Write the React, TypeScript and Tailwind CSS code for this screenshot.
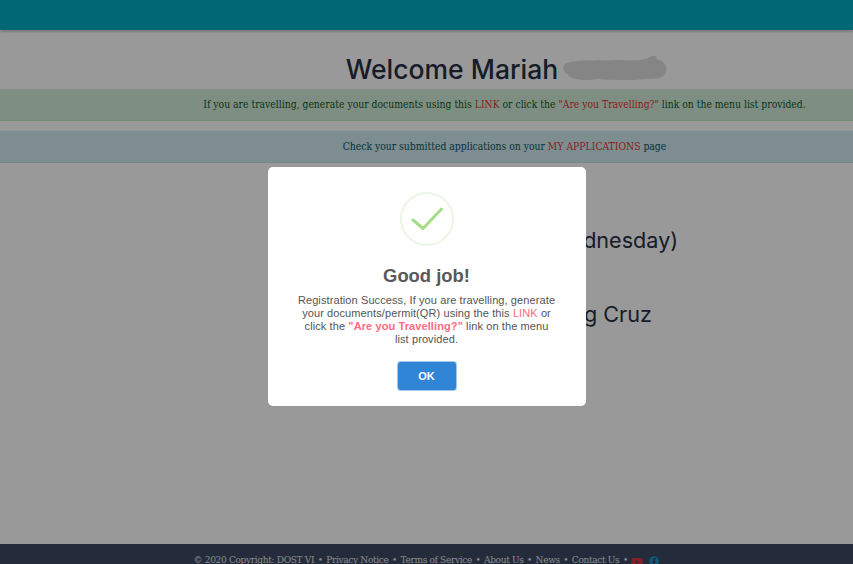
import React from "react";
import { FaYoutube, FaFacebook } from "react-icons/fa";

function Dot() {
  return <span className="mx-[3.5px]">•</span>;
}

export default function App() {
  return (
    <div className="relative flex h-[564px] w-full flex-col overflow-hidden bg-white font-['DejaVu_Serif_Condensed','DejaVu_Serif',serif] text-[#1f2d3d]">
      <header className="h-[30px] shrink-0 bg-[#00adc3] shadow-[0_2px_2px_rgba(0,0,0,0.2)]" />
      <main className="flex min-h-0 flex-1 flex-col">
        <div className="relative mt-[20px] flex h-[39px] items-center justify-center pl-[156px]">
          <h1 className="whitespace-nowrap font-['Inter',sans-serif] text-[26.5px] font-medium leading-[39px] text-[#273043]">
            Welcome Mariah<span className="inline-block w-[105px]" />
          </h1>
          <svg className="absolute left-[560px] top-[3px]" width="110" height="30" viewBox="0 0 110 30">
            <path
              d="M5 11 C15 6 35 8 55 7 C70 7 78 8 86 6 L92 3 C95 2 97 3 97 6 C103 8 108 12 106 19 C104 26 94 26 84 26 C70 28 50 27 38 26 C25 28 12 27 8 22 C3 19 2 14 5 11 Z"
              fill="#dedede"
            />
          </svg>
        </div>
        <div className="flex h-[32px] items-center justify-center border-b border-[#c3e6cb] bg-[#d4edda] pl-[156px] text-[10.3px] text-[#155724]">
          <p className="whitespace-nowrap">
            If you are travelling, generate your documents using this <a className="text-[#e3342f]">LINK</a> or click the{" "}
            <a className="text-[#e3342f]">"Are you Travelling?"</a> link on the menu list provided.
          </p>
        </div>
        <div className="mt-[10px] flex h-[32px] items-center justify-center border-b border-[#bee5eb] bg-[#d1ecf1] pl-[156px] text-[10.3px] text-[#0c5460]">
          <p className="whitespace-nowrap">
            Check your submitted applications on your <a className="text-[#e3342f]">MY APPLICATIONS</a> page
          </p>
        </div>
        <div className="mt-[63px] flex flex-col items-center pl-[156px] font-['Inter',sans-serif] text-[21.6px] leading-[28px] text-[#273043]">
          <p className="whitespace-nowrap">September 18, 2020 (Wednesday)</p>
          <p className="mt-[46px] whitespace-nowrap">Mariah Ledesma Young Cruz</p>
        </div>
      </main>
      <footer className="flex h-[20px] shrink-0 items-start justify-center bg-[#3c4861] pt-[9px] text-[10px] leading-[14px] tracking-[-0.32px] text-[#e5e7eb]">
        <span className="whitespace-nowrap">© 2020 Copyright: DOST VI</span>
        <Dot />
        <span className="whitespace-nowrap">Privacy Notice</span>
        <Dot />
        <span className="whitespace-nowrap">Terms of Service</span>
        <Dot />
        <span className="whitespace-nowrap">About Us</span>
        <Dot />
        <span className="whitespace-nowrap">News</span>
        <Dot />
        <span className="whitespace-nowrap">Contact Us</span>
        <Dot />
        <FaYoutube className="mt-[3px] text-[12px] text-[#dc3545]" />
        <FaFacebook className="ml-[6px] mt-[3px] text-[10px] text-[#1a96c0]" />
      </footer>

      <div className="absolute inset-0 flex items-start justify-center bg-black/40 pt-[167px]">
        <div className="flex h-[239px] w-[318px] flex-col items-center rounded-[5px] bg-white font-['Liberation_Sans',sans-serif]">
          <svg className="mt-[25px]" width="54" height="54" viewBox="0 0 54 54">
            <circle cx="27" cy="27" r="26" fill="none" stroke="#ecf6e3" strokeWidth="2" />
            <path d="M13 28 L23 36.5 L41.5 17" fill="none" stroke="#a5dc86" strokeWidth="3" strokeLinecap="round" strokeLinejoin="round" />
          </svg>
          <h2 className="mt-[18px] text-[18.4px] font-bold leading-[24px] text-[#595959]">Good job!</h2>
          <p className="mt-[6px] w-[259px] text-center text-[11px] leading-[13px] tracking-[0.1px] text-[#545454]">
            Registration Success, If you are travelling, generate your documents/permit(QR) using the this{" "}
            <span className="text-[#ff6b81]">LINK</span> or click the{" "}
            <b className="text-[#ff6b81]">"Are you Travelling?"</b> link on the menu list provided.
          </p>
          <button className="mt-[16px] h-[28px] w-[58px] rounded-[3px] bg-[#3085d6] text-[11px] font-bold text-white shadow-[0_0_0_1px_#a4c8ea]">
            OK
          </button>
        </div>
      </div>
    </div>
  );
}
